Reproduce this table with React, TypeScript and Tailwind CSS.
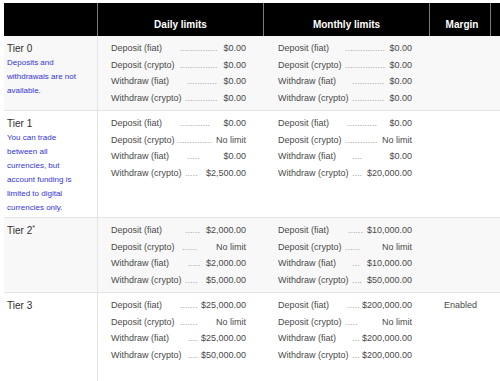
type Line = { label: string; lw: string; dots: number; value: string }

type Tier = {
  name: string
  star?: boolean
  note?: string
  shaded: boolean
  daily: Line[]
  monthly: Line[]
  margin?: string
}

const tiers: Tier[] = [
  {
    name: "Tier 0",
    note: "Deposits and withdrawals are not available.",
    shaded: true,
    daily: [
      { label: "Deposit (fiat)", lw: "w-[69px]", dots: 15, value: "$0.00" },
      { label: "Deposit (crypto)", lw: "w-[69px]", dots: 15, value: "$0.00" },
      { label: "Withdraw (fiat)", lw: "w-[76px]", dots: 12, value: "$0.00" },
      { label: "Withdraw (crypto)", lw: "w-[74px]", dots: 13, value: "$0.00" },
    ],
    monthly: [
      { label: "Deposit (fiat)", lw: "w-[67px]", dots: 16, value: "$0.00" },
      { label: "Deposit (crypto)", lw: "w-[67px]", dots: 16, value: "$0.00" },
      { label: "Withdraw (fiat)", lw: "w-[74px]", dots: 13, value: "$0.00" },
      { label: "Withdraw (crypto)", lw: "w-[74px]", dots: 13, value: "$0.00" },
    ],
  },
  {
    name: "Tier 1",
    note: "You can trade between all currencies, but account funding is limited to digital currencies only.",
    shaded: false,
    daily: [
      { label: "Deposit (fiat)", lw: "w-[69px]", dots: 12, value: "$0.00" },
      { label: "Deposit (crypto)", lw: "w-[66px]", dots: 14, value: "No limit" },
      { label: "Withdraw (fiat)", lw: "w-[76px]", dots: 5, value: "$0.00" },
      { label: "Withdraw (crypto)", lw: "w-[74px]", dots: 5, value: "$2,500.00" },
    ],
    monthly: [
      { label: "Deposit (fiat)", lw: "w-[69px]", dots: 12, value: "$0.00" },
      { label: "Deposit (crypto)", lw: "w-[67px]", dots: 13, value: "No limit" },
      { label: "Withdraw (fiat)", lw: "w-[74px]", dots: 4, value: "$0.00" },
      { label: "Withdraw (crypto)", lw: "w-[74px]", dots: 4, value: "$20,000.00" },
    ],
  },
  {
    name: "Tier 2",
    star: true,
    shaded: true,
    daily: [
      { label: "Deposit (fiat)", lw: "w-[74px]", dots: 6, value: "$2,000.00" },
      { label: "Deposit (crypto)", lw: "w-[71px]", dots: 6, value: "No limit" },
      { label: "Withdraw (fiat)", lw: "w-[77px]", dots: 5, value: "$2,000.00" },
      { label: "Withdraw (crypto)", lw: "w-[74px]", dots: 5, value: "$5,000.00" },
    ],
    monthly: [
      { label: "Deposit (fiat)", lw: "w-[70px]", dots: 6, value: "$10,000.00" },
      { label: "Deposit (crypto)", lw: "w-[67px]", dots: 6, value: "No limit" },
      { label: "Withdraw (fiat)", lw: "w-[74px]", dots: 3, value: "$10,000.00" },
      { label: "Withdraw (crypto)", lw: "w-[74px]", dots: 4, value: "$50,000.00" },
    ],
  },
  {
    name: "Tier 3",
    shaded: false,
    margin: "Enabled",
    daily: [
      { label: "Deposit (fiat)", lw: "w-[69px]", dots: 7, value: "$25,000.00" },
      { label: "Deposit (crypto)", lw: "w-[69px]", dots: 7, value: "No limit" },
      { label: "Withdraw (fiat)", lw: "w-[77px]", dots: 4, value: "$25,000.00" },
      { label: "Withdraw (crypto)", lw: "w-[77px]", dots: 4, value: "$50,000.00" },
    ],
    monthly: [
      { label: "Deposit (fiat)", lw: "w-[69px]", dots: 5, value: "$200,000.00" },
      { label: "Deposit (crypto)", lw: "w-[67px]", dots: 5, value: "No limit" },
      { label: "Withdraw (fiat)", lw: "w-[74px]", dots: 3, value: "$200,000.00" },
      { label: "Withdraw (crypto)", lw: "w-[74px]", dots: 3, value: "$200,000.00" },
    ],
  },
]

function LimitLines({ lines }: { lines: Line[] }) {
  return (
    <div className="flex flex-col">
      {lines.map((l) => (
        <div key={l.label} className="flex items-baseline h-[16.5px] leading-[16.5px] whitespace-nowrap">
          <span className={`${l.lw} shrink-0`}>{l.label}</span>
          <span className="shrink-0 text-[#a0a0a0]">{".".repeat(l.dots)}</span>
          <span className="flex-1 text-right">{l.value}</span>
        </div>
      ))}
    </div>
  )
}

export default function App() {
  return (
    <div className="w-[500px] h-[381px] overflow-hidden bg-white pl-[4px] pt-[3px] flex flex-col font-['Liberation_Sans',Arial,sans-serif]">
      {/* header */}
      <div className="grid grid-cols-[93px_166px_166px_61px_1fr] h-[33px] shrink-0 bg-black text-white font-bold text-[10px]">
        <div />
        <div className="flex items-end justify-center pb-[4px] border-l border-[#7a7a7a]">Daily limits</div>
        <div className="flex items-end justify-center pb-[4px] border-l border-[#7a7a7a]">Monthly limits</div>
        <div className="flex items-end justify-center pb-[4px] pl-[4px] border-l border-[#7a7a7a]">Margin</div>
        <div className="border-l border-[#7a7a7a]" />
      </div>

      {/* tiers */}
      {tiers.map((t, i) => (
        <div
          key={t.name}
          className={`grid grid-cols-[93px_166px_166px_61px_1fr] text-[9px] text-[#4a4a4a] ${
            t.shaded ? "bg-[#f8f8f8]" : "bg-white"
          } ${i === tiers.length - 1 ? "flex-1" : "shrink-0 border-b border-[#e4e4e4]"}`}
        >
          <div className="pl-[3px] pt-[6px] pb-[2px]">
            <div className="text-[10px] leading-[14px] text-[#2e2e2e]">
              {t.name}
              {t.star && <span className="text-[7px] align-top leading-none">*</span>}
            </div>
            {t.note && (
              <p className="w-[74px] text-[8px] leading-[14px] text-[#3434d4]">{t.note}</p>
            )}
          </div>
          <div className="border-l border-[#e4e4e4] pl-[13px] pr-[17px] py-[4px]">
            <LimitLines lines={t.daily} />
          </div>
          <div className="pl-[15px] pr-[17px] py-[4px]">
            <LimitLines lines={t.monthly} />
          </div>
          <div className="pt-[4px] text-center leading-[16.5px] pl-[2px]">{t.margin}</div>
          <div />
        </div>
      ))}
    </div>
  )
}
